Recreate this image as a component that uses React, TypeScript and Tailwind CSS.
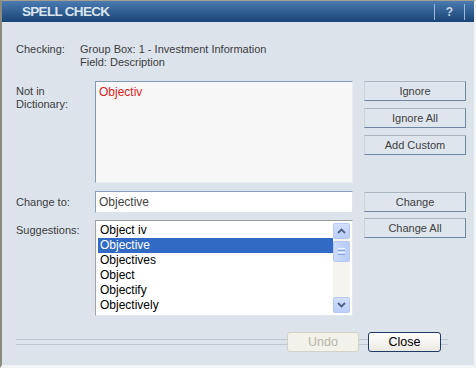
import React from "react";

const ChevUp = () => (
  <svg width="9" height="6" viewBox="0 0 9 6">
    <path d="M1 5 L4.5 1.5 L8 5" fill="none" stroke="#4d6185" strokeWidth="1.8" />
  </svg>
);
const ChevDown = () => (
  <svg width="9" height="6" viewBox="0 0 9 6">
    <path d="M1 1 L4.5 4.5 L8 1" fill="none" stroke="#4d6185" strokeWidth="1.8" />
  </svg>
);

function SideButton({ label, className = "" }: { label: string; className?: string }) {
  return (
    <div
      className={
        "h-[20px] w-[102px] flex items-center justify-center text-[11px] text-[#404040] bg-[#dfe5ec] border border-t-[#aab4bf] border-l-[#c9d1da] border-r-[#7389a3] border-b-[#6f86a2] " +
        className
      }
    >
      {label}
    </div>
  );
}

const items = ["Object iv", "Objective", "Objectives", "Object", "Objectify", "Objectively"];

export default function App() {
  return (
    <div className="w-[476px] h-[368px] flex flex-col bg-[#dce3eb] border-t border-l-2 border-t-[#a29f92] border-l-[#8d8a7f] border-r-2 border-r-[#f2f3f5] border-b-[3px] border-b-[#f2f3f5] font-['Liberation_Sans',Arial,sans-serif] overflow-hidden">
      {/* Title bar */}
      <div className="h-[21px] shrink-0 flex items-center justify-between bg-linear-to-b from-[#4b7bb0] to-[#184475]">
        <div className="pl-[20px] text-[13.5px] font-bold text-[#dae4ef] tracking-[-0.7px] leading-none">
          SPELL CHECK
        </div>
        <div className="flex items-center pr-[9px] h-full">
          <div className="w-px h-[16px] bg-[#9db8d8]" />
          <div className="w-[29px] text-center text-[12px] font-bold text-[#c9d6e6] leading-none">?</div>
          <div className="w-px h-[16px] bg-[#9db8d8]" />
        </div>
      </div>

      {/* Body */}
      <div className="flex-1 flex flex-col pl-[14px] pt-[21px] text-[11px] text-[#3d3d3d]">
        {/* Checking */}
        <div className="flex leading-[13px]">
          <div className="w-[64px]">Checking:</div>
          <div>
            <div>Group Box: 1 - Investment Information</div>
            <div>Field: Description</div>
          </div>
        </div>

        {/* Main area */}
        <div className="flex mt-[12px]">
          {/* Left */}
          <div className="flex flex-col w-[337px]">
            <div className="flex">
              <div className="w-[79px] pt-[4px] leading-[13px]">
                <div>Not in</div>
                <div>Dictionary:</div>
              </div>
              <div className="w-[258px] h-[102px] bg-[#f7f7f7] border border-t-[#8499b2] border-l-[#8499b2] border-r-[#e9edf1] border-b-[#e9edf1] px-[3px] pt-[3px] text-[12px] leading-[15px] text-[#e02424]">
                Objectiv
              </div>
            </div>

            <div className="flex mt-[8px] items-center">
              <div className="w-[79px] leading-[13px]">Change to:</div>
              <div className="w-[258px] h-[22px] bg-white border border-t-[#8aa0ba] border-l-[#8aa0ba] border-r-[#dfe5ec] border-b-[#dfe5ec] px-[3px] flex items-center text-[12px] text-[#444]">
                Objective
              </div>
            </div>

            <div className="flex mt-[7px]">
              <div className="w-[79px] pt-[4px] leading-[13px]">Suggestions:</div>
              <div className="w-[258px] h-[96px] bg-white border border-t-[#9b9b9b] border-l-[#a3a3a3] border-r-[#e4e8ec] border-b-[#e4e8ec] p-[2px] pr-[2px] flex">
                <div className="flex-1 flex flex-col">
                  {items.map((it, i) => (
                    <div
                      key={it}
                      className={
                        "h-[15px] pl-[2px] text-[12px] leading-[15px] " +
                        (i === 1 ? "bg-[#316ac5] text-white" : "text-black")
                      }
                    >
                      {it}
                    </div>
                  ))}
                </div>
                <div className="w-[17px] flex flex-col bg-[#f5f4ef]">
                  <div className="h-[16px] rounded-[2px] border border-[#b7c9f2] bg-linear-to-b from-[#d3e0fd] to-[#b9cdf7] flex items-center justify-center">
                    <ChevUp />
                  </div>
                  <div className="mt-[2px] h-[21px] rounded-[2px] border border-[#b7c9f2] bg-linear-to-r from-[#cbdafc] to-[#b8ccf7] flex flex-col items-center justify-center gap-[1px]">
                    <div className="w-[7px] h-px bg-[#eef3fe]" />
                    <div className="w-[7px] h-px bg-[#8ca5dc]" />
                    <div className="w-[7px] h-px bg-[#eef3fe]" />
                    <div className="w-[7px] h-px bg-[#8ca5dc]" />
                  </div>
                  <div className="flex-1" />
                  <div className="h-[16px] rounded-[2px] border border-[#b7c9f2] bg-linear-to-b from-[#d3e0fd] to-[#b9cdf7] flex items-center justify-center">
                    <ChevDown />
                  </div>
                </div>
              </div>
            </div>
          </div>

          {/* Right buttons */}
          <div className="ml-[11px] flex flex-col">
            <SideButton label="Ignore" />
            <SideButton label="Ignore All" className="mt-[7px]" />
            <SideButton label="Add Custom" className="mt-[7px]" />
            <SideButton label="Change" className="mt-[37px]" />
            <SideButton label="Change All" className="mt-[6px]" />
          </div>
        </div>

        {/* Bottom */}
        <div className="flex items-center mt-[16px] w-[432px]">
          <div className="flex-1 h-[6px] border-y border-[#bcc7d3]" />
          <div className="w-[72px] h-[20px] rounded-[3px] border border-[#d3d2c4] bg-[#f3f2ea] flex items-center justify-center text-[12.5px] text-[#b7b5aa]">
            Undo
          </div>
          <div className="w-[9px] h-[6px] border-y border-[#bcc7d3]" />
          <div className="w-[73px] h-[20px] rounded-[3px] border border-[#1f3b63] bg-linear-to-b from-[#ffffff] to-[#ebe9e2] flex items-center justify-center text-[12.5px] text-black">
            Close
          </div>
          <div className="w-[7px] h-[6px] border-y border-[#bcc7d3]" />
        </div>
      </div>
    </div>
  );
}
